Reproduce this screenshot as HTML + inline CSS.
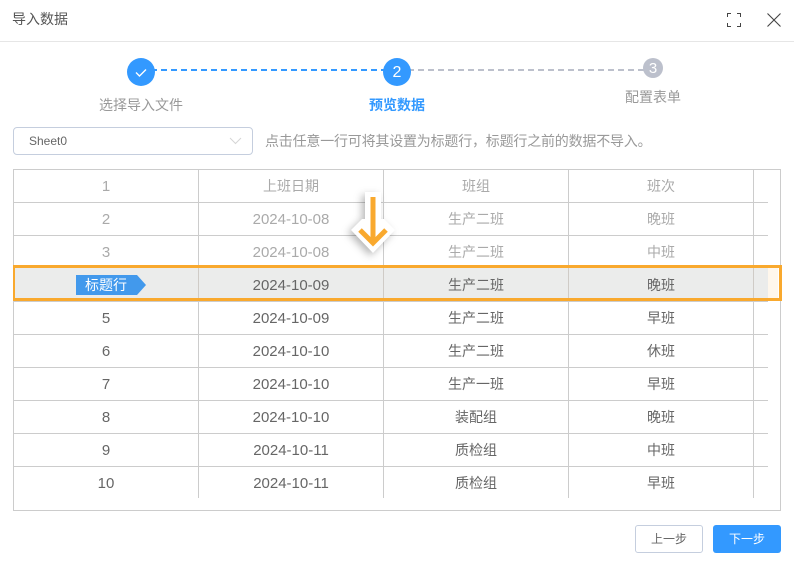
<!DOCTYPE html>
<html lang="zh">
<head>
<meta charset="utf-8">
<style>
html,body{margin:0;padding:0;background:#fff}
#p{position:relative;width:794px;height:563px;overflow:hidden;background:#fff;font-family:"Liberation Sans","Noto Sans CJK SC",sans-serif;color:#666}
#p div{position:absolute}
.t{white-space:nowrap;text-align:center;font-size:14px;line-height:20px;height:20px}
.h{background:#ccc;height:1px;left:14px;width:754px}
.v{background:#ccc;width:1px;top:170px;height:328px}
.n{font-size:15px;padding-top:1px}
</style>
</head>
<body>
<div id="p">
  <div style="left:12px;top:9px;font-size:14px;line-height:20px;color:#555;white-space:nowrap">导入数据</div>
  <div style="left:0;top:41px;width:794px;height:1px;background:#e6e6e6"></div>
  <svg style="position:absolute;left:726px;top:12px" width="16" height="16" viewBox="0 0 16 16" fill="none" stroke="#444" stroke-width="1"><path d="M1.5 5V1.500H5M11 1.500H14.500V5M14.500 11V14.500H11M5 14.500H1.500V11"/></svg>
  <svg style="position:absolute;left:766px;top:12px" width="16" height="16" viewBox="0 0 16 16" fill="none" stroke="#444" stroke-width="1.1"><path d="M1.5 1.5L14.5 14.500M14.500 1.500L1.500 14.500"/></svg>

  <svg style="position:absolute;left:0;top:50px" width="794" height="40">
    <line x1="151" y1="20" x2="384" y2="20" stroke="#3399ff" stroke-width="2" stroke-dasharray="6 4"/>
    <line x1="408" y1="20" x2="644" y2="20" stroke="#bcc0cc" stroke-width="2" stroke-dasharray="6 4"/>
    <circle cx="141" cy="22" r="14" fill="#3399ff"/>
    <path d="M136 22.5L139.5 26L146 19.5" fill="none" stroke="#fff" stroke-width="1.4"/>
    <circle cx="397" cy="22" r="14" fill="#3399ff"/>
    <circle cx="653" cy="18" r="10" fill="#bcc0cc"/>
  </svg>
  <div class="t" style="left:383px;top:62px;width:28px;font-size:16px;color:#fff;padding-top:1px">2</div>
  <div class="t" style="left:643px;top:58px;width:20px;font-size:15px;color:#fff;padding-top:1px">3</div>
  <div class="t" style="left:81px;top:95px;width:120px;color:#999">选择导入文件</div>
  <div class="t" style="left:337px;top:95px;width:120px;color:#3399ff;font-weight:bold">预览数据</div>
  <div class="t" style="left:593px;top:87px;width:120px;color:#999">配置表单</div>

  <div style="left:13px;top:127px;width:238px;height:26px;border:1px solid #c5cede;border-radius:4px;background:#fff"></div>
  <div style="left:29px;top:131px;font-size:12px;line-height:20px;color:#666;white-space:nowrap">Sheet0</div>
  <svg style="position:absolute;left:228px;top:136px" width="14" height="10" fill="none" stroke="#d5d5d5" stroke-width="1"><path d="M2 2L7.500 7.500L13 2"/></svg>
  <div style="left:265px;top:131px;font-size:14px;line-height:20px;color:#999;white-space:nowrap;letter-spacing:-.2px">点击任意一行可将其设置为标题行，标题行之前的数据不导入。</div>

  <div style="left:13px;top:169px;width:766px;height:340px;border:1px solid #ccc"></div>
  <div class="v" style="left:198px"></div>
  <div class="v" style="left:383px"></div>
  <div class="v" style="left:568px"></div>
  <div class="v" style="left:753px"></div>
  <div class="h" style="top:202px"></div>
  <div class="h" style="top:235px"></div>
  <div class="h" style="top:301px"></div>
  <div class="h" style="top:334px"></div>
  <div class="h" style="top:367px"></div>
  <div class="h" style="top:400px"></div>
  <div class="h" style="top:433px"></div>
  <div class="h" style="top:466px"></div>

  <div style="left:15px;top:268px;width:753px;height:30px;background:#ebeceb"></div>
  <div style="left:768px;top:268px;width:10px;height:30px;background:#fff7ec"></div>
  <div style="left:198px;top:268px;width:1px;height:30px;background:#cfcbc6"></div>
  <div style="left:383px;top:268px;width:1px;height:30px;background:#cfcbc6"></div>
  <div style="left:568px;top:268px;width:1px;height:30px;background:#cfcbc6"></div>
  <div style="left:753px;top:268px;width:1px;height:30px;background:#cfcbc6"></div>
  <div style="left:13px;top:265px;width:764px;height:30px;border:3px solid #f9a92e;border-left-width:2px;border-right-width:3px"></div>

  <svg style="position:absolute;left:76px;top:275px" width="70" height="20"><path d="M0 0H61L70 10L61 20H0Z" fill="#4299ec"/></svg>
  <div class="t" style="left:76px;top:275px;width:60px;color:#fff">标题行</div>

  <div class="t n" style="left:14px;top:176px;width:184px;color:#aaa">1</div>
  <div class="t" style="left:199px;top:176px;width:184px;color:#aaa">上班日期</div>
  <div class="t" style="left:384px;top:176px;width:184px;color:#aaa">班组</div>
  <div class="t" style="left:569px;top:176px;width:184px;color:#aaa">班次</div>

  <div class="t n" style="left:14px;top:209px;width:184px;color:#aaa">2</div>
  <div class="t n" style="left:199px;top:209px;width:184px;color:#aaa">2024-10-08</div>
  <div class="t" style="left:384px;top:209px;width:184px;color:#aaa">生产二班</div>
  <div class="t" style="left:569px;top:209px;width:184px;color:#aaa">晚班</div>

  <div class="t n" style="left:14px;top:242px;width:184px;color:#aaa">3</div>
  <div class="t n" style="left:199px;top:242px;width:184px;color:#aaa">2024-10-08</div>
  <div class="t" style="left:384px;top:242px;width:184px;color:#aaa">生产二班</div>
  <div class="t" style="left:569px;top:242px;width:184px;color:#aaa">中班</div>

  <div class="t n" style="left:199px;top:275px;width:184px">2024-10-09</div>
  <div class="t" style="left:384px;top:275px;width:184px">生产二班</div>
  <div class="t" style="left:569px;top:275px;width:184px">晚班</div>

  <div class="t n" style="left:14px;top:308px;width:184px">5</div>
  <div class="t n" style="left:199px;top:308px;width:184px">2024-10-09</div>
  <div class="t" style="left:384px;top:308px;width:184px">生产二班</div>
  <div class="t" style="left:569px;top:308px;width:184px">早班</div>

  <div class="t n" style="left:14px;top:341px;width:184px">6</div>
  <div class="t n" style="left:199px;top:341px;width:184px">2024-10-10</div>
  <div class="t" style="left:384px;top:341px;width:184px">生产二班</div>
  <div class="t" style="left:569px;top:341px;width:184px">休班</div>

  <div class="t n" style="left:14px;top:374px;width:184px">7</div>
  <div class="t n" style="left:199px;top:374px;width:184px">2024-10-10</div>
  <div class="t" style="left:384px;top:374px;width:184px">生产一班</div>
  <div class="t" style="left:569px;top:374px;width:184px">早班</div>

  <div class="t n" style="left:14px;top:407px;width:184px">8</div>
  <div class="t n" style="left:199px;top:407px;width:184px">2024-10-10</div>
  <div class="t" style="left:384px;top:407px;width:184px">装配组</div>
  <div class="t" style="left:569px;top:407px;width:184px">晚班</div>

  <div class="t n" style="left:14px;top:440px;width:184px">9</div>
  <div class="t n" style="left:199px;top:440px;width:184px">2024-10-11</div>
  <div class="t" style="left:384px;top:440px;width:184px">质检组</div>
  <div class="t" style="left:569px;top:440px;width:184px">中班</div>

  <div class="t n" style="left:14px;top:473px;width:184px">10</div>
  <div class="t n" style="left:199px;top:473px;width:184px">2024-10-11</div>
  <div class="t" style="left:384px;top:473px;width:184px">质检组</div>
  <div class="t" style="left:569px;top:473px;width:184px">早班</div>

  <svg style="position:absolute;left:340px;top:185px;overflow:visible" width="70" height="75" viewBox="340 185 70 75">
    <path d="M365 192H381V219H384L395 230L373 253L351 230L362 219H365Z" fill="#fff" style="filter:drop-shadow(-3px 3px 4px rgba(0,0,0,.28))"/>
    <path d="M373 197V243M360 230L373 243L386 230" fill="none" stroke="#f9a92e" stroke-width="5"/>
  </svg>

  <div style="left:635px;top:525px;width:66px;height:26px;border:1px solid #c5cede;border-radius:3px;background:#fff"></div>
  <div class="t" style="left:635px;top:529px;width:68px;font-size:12px;color:#666">上一步</div>
  <div style="left:713px;top:525px;width:68px;height:28px;border-radius:3px;background:#3399ff"></div>
  <div class="t" style="left:713px;top:529px;width:68px;font-size:12px;color:#fff">下一步</div>
</div>
</body>
</html>
